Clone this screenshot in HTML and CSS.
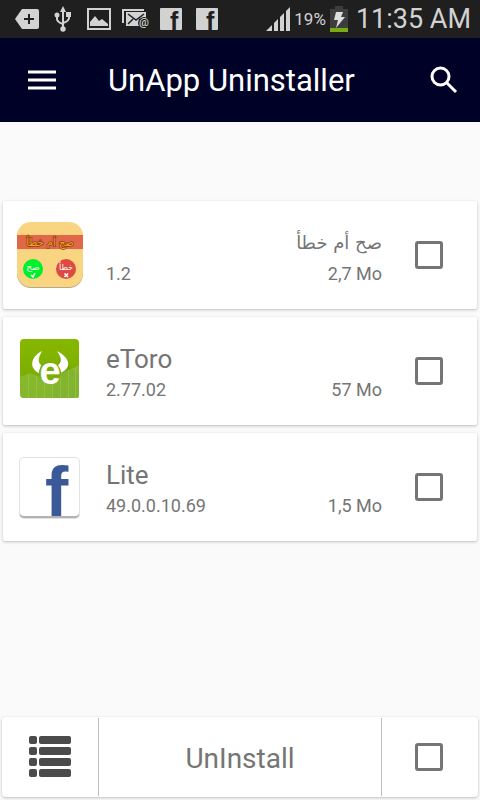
FILE: index.html
```html
<!DOCTYPE html>
<html lang="en">
<head>
<meta charset="utf-8">
<meta name="viewport" content="width=device-width, initial-scale=1">
<title>UnApp Uninstaller</title>
<link rel="stylesheet" href="styles.css">
</head>
<body>
<div class="status">
  <div class="status-left">
    <svg width="24" height="20" viewBox="0 0 24 20"><path fill="#d2d2d2" d="M7 0H22Q24 0 24 2V18Q24 20 22 20H7L0 10Z"/><path stroke="#1f1f1f" stroke-width="2" d="M9 10H19M14 5V15"/></svg>
    <svg width="20" height="26" viewBox="-1 0 20 26" fill="none" stroke="#d2d2d2" stroke-width="2"><path d="M9 4V22M3 9V13Q3 16 9 18M15 8V12Q15 15 9 17"/><path fill="#d2d2d2" stroke="none" d="M9 0L12 6H6ZM12 6H17V11H12Z"/><circle cx="3" cy="9" r="2.5" fill="#d2d2d2" stroke="none"/><circle cx="9" cy="23" r="2.7" fill="#d2d2d2" stroke="none"/></svg>
    <svg width="24" height="22" viewBox="0 0 24 22"><path fill="none" stroke="#d2d2d2" stroke-width="2" d="M1 1H23V21H1Z"/><path fill="#d2d2d2" d="M3 18V14L8 8L12 13L15 11L21 16V18Z"/></svg>
    <svg class="mail" width="28" height="20" viewBox="0 0 28 20"><path fill="none" stroke="#d2d2d2" stroke-width="2" d="M1 14V1H22"/><path fill="#d2d2d2" d="M4 3H24V17H4Z"/><path fill="none" stroke="#1f1f1f" stroke-width="1.5" d="M6 5L14 11L22 5M6 15L11 10M22 15L17 10"/><circle cx="22" cy="14" r="6" fill="#1f1f1f"/><text x="22" y="17" text-anchor="middle" font-size="11" font-weight="500" fill="#d2d2d2">@</text></svg>
    <svg width="22" height="22" viewBox="0 0 22 22"><rect width="22" height="22" rx="1" fill="#d2d2d2"/><text class="f-mark" x="10" y="22" font-size="25" fill="#1f1f1f">f</text></svg>
    <svg width="22" height="22" viewBox="0 0 22 22"><rect width="22" height="22" rx="1" fill="#d2d2d2"/><text class="f-mark" x="10" y="22" font-size="25" fill="#1f1f1f">f</text></svg>
  </div>
  <div class="status-right">
    <svg width="24" height="24" viewBox="0 0 24 24" fill="#d2d2d2"><path d="M0 24L6 18V24ZM8 16L12 12V24H8ZM14 10L18 6V24H14ZM20 4L24 0V24H20Z"/></svg>
    <span class="percent">19%</span>
    <svg width="18" height="26" viewBox="0 0 18 26"><path fill="#3d3d3d" d="M5 0H13V3H18V22H0V3H5Z"/><path fill="#7aab14" d="M0 22H18V26H0Z"/><path fill="#dedede" d="M6 6H13L11 11H15L6 22L8 14H4Z"/></svg>
    <span class="clock">11:35 AM</span>
  </div>
</div>

<header class="appbar">
  <button aria-label="Menu"><svg width="28" height="22" viewBox="0 0 28 22"><path stroke="#fff" stroke-width="3" d="M0 3H28M0 11H28M0 19H28"/></svg></button>
  <h1>UnApp Uninstaller</h1>
  <button aria-label="Search"><svg width="28" height="28" viewBox="0 0 28 28" fill="none" stroke="#fff" stroke-width="3"><circle cx="10.500" cy="10.500" r="8.500"/><path d="M16.500 16.500L26 26"/></svg></button>
</header>

<main>
  <ul class="apps">
    <li class="card">
      <svg width="68" height="68" viewBox="0 0 68 68">
        <rect x="1" y="2" width="66" height="65" rx="14" fill="#b9aa86"/>
        <rect x="1" y="1" width="66" height="65" rx="14" fill="#fad581"/>
        <path fill="#e06848" d="M1 14H67V28H1Z"/>
        <text class="ar" x="34" y="25" text-anchor="middle" direction="rtl" font-size="10" fill="#f3a51c" stroke="#8e3d18" stroke-width="1.500" paint-order="stroke">صح أم خطأ</text>
        <circle cx="17" cy="48" r="10" fill="#00f02c"/><circle cx="50" cy="48" r="10" fill="#dd4b40"/>
        <text class="ar" x="17" y="49" text-anchor="middle" font-size="9" fill="#fff">صح</text>
        <text class="ar" x="50" y="49" text-anchor="middle" font-size="8" fill="#fff">خطأ</text>
        <path fill="none" stroke="#fff" stroke-width="1.600" d="M15 54L17 56L19 52M48.500 52.500L52 56M52 52.500L48.500 56"/>
      </svg>
      <div class="info">
        <label class="name arabic" for="a1" dir="rtl" lang="ar">صح أم خطأ</label>
        <div class="meta"><span>1.2</span><span>2,7 Mo</span></div>
      </div>
      <input type="checkbox" id="a1">
    </li>
    <li class="card">
      <svg width="68" height="68" viewBox="0 0 68 68">
        <defs><linearGradient id="g" x2="0" y2="1"><stop stop-color="#86b800"/><stop offset="1" stop-color="#75a803"/></linearGradient></defs>
        <rect x="4" y="2" width="59" height="59" rx="4" fill="url(#g)"/>
        <path fill="#62970a" opacity=".45" d="M44 20L63 39V61H35Z"/>
        <path fill="#8fc04a" opacity=".6" d="M4 40L14 36L24 40L33 43L45 36L52 33L57 31L63 28V57Q63 61 59 61H8Q4 61 4 57Z"/>
        <path stroke="#b6d97b" stroke-width="1" opacity=".3" d="M12.500 37V61M20.500 39V61M28.500 43V61M36.500 42V61M44.500 37V61M52.500 33V61M59.500 31V61"/>
        <path fill="#fff" d="M26 14C13 21 14 32 23 36L25 28Q20 24 26 14ZM41 14C56 22 55 32 44 36L42 28Q48 24 41 14Z"/>
        <circle cx="34" cy="36" r="11" fill="#7bae06"/>
        <text class="e-mark" x="34" y="47" text-anchor="middle" font-size="38" fill="#fff">e</text>
      </svg>
      <div class="info">
        <label class="name" for="a2">eToro</label>
        <div class="meta"><span>2.77.02</span><span>57 Mo</span></div>
      </div>
      <input type="checkbox" id="a2">
    </li>
    <li class="card">
      <svg width="68" height="68" viewBox="0 0 68 68">
        <rect x="3" y="4" width="61" height="62" rx="5" fill="#e3e3e3"/>
        <rect x="4" y="6" width="59" height="59" rx="4" fill="#b3b3b3"/>
        <rect x="4" y="5" width="59" height="58" rx="4" fill="#fff"/>
        <text class="f-mark" x="29" y="63" font-size="70" fill="#3b5998">f</text>
      </svg>
      <div class="info">
        <label class="name" for="a3">Lite</label>
        <div class="meta"><span>49.0.0.10.69</span><span>1,5 Mo</span></div>
      </div>
      <input type="checkbox" id="a3">
    </li>
  </ul>
</main>

<footer class="bottom">
  <button class="list-btn" aria-label="List"><svg width="44" height="44" viewBox="0 0 44 44" fill="#4b4b4b"><g id="r"><rect x="1" y="1" width="8" height="8" rx="2"/><rect x="11" y="1" width="32" height="8" rx="2"/></g><use href="#r" y="11"/><use href="#r" y="22"/><use href="#r" y="33"/></svg></button>
  <button class="uninstall">UnInstall</button>
  <div class="all"><input type="checkbox" aria-label="Select all"></div>
</footer>
</body>
</html>
```
FILE: styles.css
```css
* { box-sizing: border-box; }
body {
  margin: 0;
  min-height: 100vh;
  display: flex;
  flex-direction: column;
  background: #fafafa;
  color: #757575;
  font-family: Roboto, "Noto Sans", sans-serif;
}
svg { display: block; flex: none; }
button {
  border: 0;
  padding: 0;
  background: none;
  color: inherit;
  font: inherit;
}
.status {
  display: flex;
  justify-content: space-between;
  align-items: center;
  height: 38px;
  padding: 0 9px 0 15px;
  background: #1f1f1f;
  color: #d2d2d2;
}
.status-left { display: flex; align-items: center; gap: 14px; }
.mail { margin: 0 -4px 0 -3px; }
.status-right { display: flex; align-items: center; gap: 4px; }
.percent { font-size: 17px; }
.clock { font-size: 27px; line-height: 38px; margin-left: 4px; white-space: nowrap; }
.f-mark,
.e-mark { font-family: "Liberation Sans", sans-serif; font-weight: 700; }
.ar { font-family: "DejaVu Sans", sans-serif; }
.appbar {
  display: flex;
  align-items: center;
  height: 84px;
  padding: 0 22px 0 28px;
  background: #000127;
  color: #fff;
}
.appbar h1 {
  flex: 1;
  margin: 0 0 0 52px;
  padding-top: 2px;
  font-size: 31px;
  font-weight: 400;
  line-height: 40px;
}
main { flex: 1; padding: 79px 3px 0; }
.apps {
  display: flex;
  flex-direction: column;
  gap: 8px;
  margin: 0;
  padding: 0;
  list-style: none;
}
.card {
  display: flex;
  align-items: center;
  height: 108px;
  padding: 0 34px 0 13px;
  border-radius: 2px;
  background: #fff;
  box-shadow: 0 1px 3px rgba(0, 0, 0, 0.25);
}
.info { flex: 1; margin: 0 33px 0 22px; padding-top: 6px; }
.name { display: block; font-size: 26px; line-height: 32px; }
.arabic { font-family: "DejaVu Sans", sans-serif; font-size: 18px; }
.meta {
  display: flex;
  justify-content: space-between;
  font-size: 18px;
  line-height: 30px;
}
input[type="checkbox"] {
  appearance: none;
  flex: none;
  width: 28px;
  height: 28px;
  margin: 0;
  border: 3px solid #757575;
  border-radius: 3px;
}
.bottom {
  display: grid;
  grid-template-columns: 96px 1fr 96px;
  height: 80px;
  margin: 0 2px 3px;
  border-radius: 4px;
  background: #fff;
  box-shadow: 0 1px 3px rgba(0, 0, 0, 0.25);
}
.list-btn, .all { display: flex; align-items: center; justify-content: center; }
.all { padding-right: 2px; }
.uninstall {
  margin: 1px 0;
  padding-top: 3px;
  border: solid #bdbdbd;
  border-width: 0 1px;
  font-size: 28px;
}
```
